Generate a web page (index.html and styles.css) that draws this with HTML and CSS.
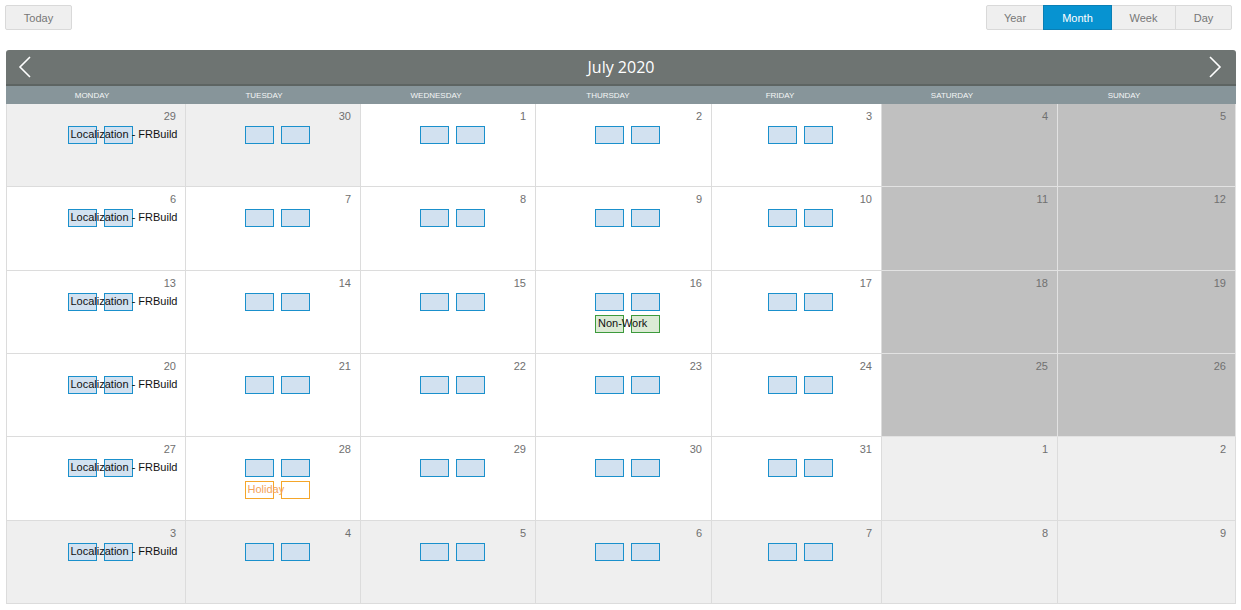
FILE: index.html
```html
<!DOCTYPE html>
<html>
<head>
<meta charset="utf-8">
<link rel="stylesheet" href="styles.css">
</head>
<body>
<div class="toolbar">
  <button class="btn">Today</button>
  <div class="views">
    <button class="btn seg">Year</button>
    <button class="btn seg active">Month</button>
    <button class="btn seg">Week</button>
    <button class="btn seg">Day</button>
  </div>
</div>
<div class="calendar">
  <div class="cal-head">
    <span class="nav"><svg width="14" height="22" viewBox="0 0 14 22"><path d="M12 1 L2 11 L12 21" fill="none" stroke="#fff" stroke-width="1.6"/></svg></span>
    <span class="title">July 2020</span>
    <span class="nav"><svg width="14" height="22" viewBox="0 0 14 22"><path d="M2 1 L12 11 L2 21" fill="none" stroke="#fff" stroke-width="1.6"/></svg></span>
  </div>
  <div class="days">
    <div>Monday</div><div>Tuesday</div><div>Wednesday</div><div>Thursday</div><div>Friday</div><div>Saturday</div><div>Sunday</div>
  </div>
  <div class="grid">
    <!-- week 1 -->
    <div class="cell other"><div class="num">29</div><div class="ev"><div class="box"><span class="lbl">Localization - FRBuild</span></div><div class="box"></div></div></div>
    <div class="cell other"><div class="num">30</div><div class="ev"><div class="box"></div><div class="box"></div></div></div>
    <div class="cell"><div class="num">1</div><div class="ev"><div class="box"></div><div class="box"></div></div></div>
    <div class="cell"><div class="num">2</div><div class="ev"><div class="box"></div><div class="box"></div></div></div>
    <div class="cell"><div class="num">3</div><div class="ev"><div class="box"></div><div class="box"></div></div></div>
    <div class="cell wkend"><div class="num">4</div></div>
    <div class="cell wkend"><div class="num">5</div></div>
    <!-- week 2 -->
    <div class="cell"><div class="num">6</div><div class="ev"><div class="box"><span class="lbl">Localization - FRBuild</span></div><div class="box"></div></div></div>
    <div class="cell"><div class="num">7</div><div class="ev"><div class="box"></div><div class="box"></div></div></div>
    <div class="cell"><div class="num">8</div><div class="ev"><div class="box"></div><div class="box"></div></div></div>
    <div class="cell"><div class="num">9</div><div class="ev"><div class="box"></div><div class="box"></div></div></div>
    <div class="cell"><div class="num">10</div><div class="ev"><div class="box"></div><div class="box"></div></div></div>
    <div class="cell wkend"><div class="num">11</div></div>
    <div class="cell wkend"><div class="num">12</div></div>
    <!-- week 3 -->
    <div class="cell"><div class="num">13</div><div class="ev"><div class="box"><span class="lbl">Localization - FRBuild</span></div><div class="box"></div></div></div>
    <div class="cell"><div class="num">14</div><div class="ev"><div class="box"></div><div class="box"></div></div></div>
    <div class="cell"><div class="num">15</div><div class="ev"><div class="box"></div><div class="box"></div></div></div>
    <div class="cell"><div class="num">16</div><div class="ev"><div class="box"></div><div class="box"></div></div><div class="ev"><div class="box green"><span class="lbl">Non-Work</span></div><div class="box green"></div></div></div>
    <div class="cell"><div class="num">17</div><div class="ev"><div class="box"></div><div class="box"></div></div></div>
    <div class="cell wkend"><div class="num">18</div></div>
    <div class="cell wkend"><div class="num">19</div></div>
    <!-- week 4 -->
    <div class="cell"><div class="num">20</div><div class="ev"><div class="box"><span class="lbl">Localization - FRBuild</span></div><div class="box"></div></div></div>
    <div class="cell"><div class="num">21</div><div class="ev"><div class="box"></div><div class="box"></div></div></div>
    <div class="cell"><div class="num">22</div><div class="ev"><div class="box"></div><div class="box"></div></div></div>
    <div class="cell"><div class="num">23</div><div class="ev"><div class="box"></div><div class="box"></div></div></div>
    <div class="cell"><div class="num">24</div><div class="ev"><div class="box"></div><div class="box"></div></div></div>
    <div class="cell wkend"><div class="num">25</div></div>
    <div class="cell wkend"><div class="num">26</div></div>
    <!-- week 5 -->
    <div class="cell"><div class="num">27</div><div class="ev"><div class="box"><span class="lbl">Localization - FRBuild</span></div><div class="box"></div></div></div>
    <div class="cell"><div class="num">28</div><div class="ev"><div class="box"></div><div class="box"></div></div><div class="ev"><div class="box orange"><span class="lbl">Holiday</span></div><div class="box orange"></div></div></div>
    <div class="cell"><div class="num">29</div><div class="ev"><div class="box"></div><div class="box"></div></div></div>
    <div class="cell"><div class="num">30</div><div class="ev"><div class="box"></div><div class="box"></div></div></div>
    <div class="cell"><div class="num">31</div><div class="ev"><div class="box"></div><div class="box"></div></div></div>
    <div class="cell other"><div class="num">1</div></div>
    <div class="cell other"><div class="num">2</div></div>
    <!-- week 6 -->
    <div class="cell other"><div class="num">3</div><div class="ev"><div class="box"><span class="lbl">Localization - FRBuild</span></div><div class="box"></div></div></div>
    <div class="cell other"><div class="num">4</div><div class="ev"><div class="box"></div><div class="box"></div></div></div>
    <div class="cell other"><div class="num">5</div><div class="ev"><div class="box"></div><div class="box"></div></div></div>
    <div class="cell other"><div class="num">6</div><div class="ev"><div class="box"></div><div class="box"></div></div></div>
    <div class="cell other"><div class="num">7</div><div class="ev"><div class="box"></div><div class="box"></div></div></div>
    <div class="cell other"><div class="num">8</div></div>
    <div class="cell other"><div class="num">9</div></div>
  </div>
</div>
</body>
</html>
```

FILE: styles.css
```css
* { box-sizing: border-box; }
body {
  margin: 0;
  padding: 5px 5px 6px 6px;
  font-family: "Liberation Sans", Arial, sans-serif;
  background: #fff;
}
.toolbar {
  display: flex;
  justify-content: space-between;
  align-items: flex-start;
  margin-left: -1px;
  padding-right: 4px;
  height: 45px;
}
.btn {
  height: 25px;
  border: 1px solid #d9d9d9;
  background: #efefef;
  color: #777;
  font-family: "Liberation Sans", Arial, sans-serif;
  font-size: 11px;
  padding: 0;
  width: 67px;
  border-radius: 2px;
  cursor: pointer;
}
.views { display: flex; }
.seg { border-radius: 0; margin-left: -1px; }
.seg:first-child { width: 58px; border-radius: 2px 0 0 2px; margin-left: 0; }
.seg:nth-child(2) { width: 69px; }
.seg:nth-child(3) { width: 65px; }
.seg:last-child { width: 57px; border-radius: 0 2px 2px 0; }
.seg.active {
  background: #0793d1;
  border-color: #0a7fb5;
  color: #fff;
  position: relative;
}
.calendar { width: 1230px; }
.cal-head {
  height: 36px;
  background: #6e7472;
  border-bottom: 2px solid #5d6462;
  border-radius: 3px 3px 0 0;
  display: flex;
  align-items: center;
  justify-content: space-between;
  padding: 0 14px 0 12px;
}
.nav { display: flex; align-items: center; height: 22px; }
.title { color: #fff; font-size: 16px; font-family: "Open Sans", "Liberation Sans", sans-serif; margin-left: 2px; }
.days {
  display: grid;
  grid-template-columns: repeat(7, 172px);
  background: #87959a;
  height: 18px;
  color: #f4f6f6;
  font-size: 8px;
  text-transform: uppercase;
  align-items: center;
  text-align: center;
}
.grid {
  display: grid;
  grid-template-columns: 179fr 175fr 175fr 176fr 170fr 176fr 178fr;
  grid-template-rows: repeat(6, 1fr);
  height: 500px;
  border-left: 1px solid #dcdcdc;
}
.cell {
  background: #fff;
  border-right: 1px solid #dcdcdc;
  border-bottom: 1px solid #dcdcdc;
  padding: 6px 9px 0 8px;
  display: flex;
  flex-direction: column;
  gap: 3px;
}
.cell.other { background: #efefef; }
.cell.wkend { background: #c0c0c0; border-color: #e2e2e2; }
.num {
  text-align: right;
  font-size: 11px;
  color: #707070;
  line-height: 13px;
  margin-bottom: 0;
}
.ev {
  display: flex;
  justify-content: center;
  gap: 7px;
  padding-left: 9px;
}
.ev + .ev { margin-top: 1px; }
.box {
  width: 29px;
  height: 18px;
  background: #d2e1f0;
  border: 1px solid #1a90cc;
  position: relative;
}
.box.green { background: #dcead5; border-color: #3c9a3c; }
.box.orange { background: #fff; border-color: #f5a62a; }
.lbl {
  position: absolute;
  z-index: 1;
  left: 2px;
  top: 0;
  line-height: 15px;
  font-size: 11px;
  color: #111;
  white-space: nowrap;
}
.orange .lbl { color: #f4a25a; }
```
